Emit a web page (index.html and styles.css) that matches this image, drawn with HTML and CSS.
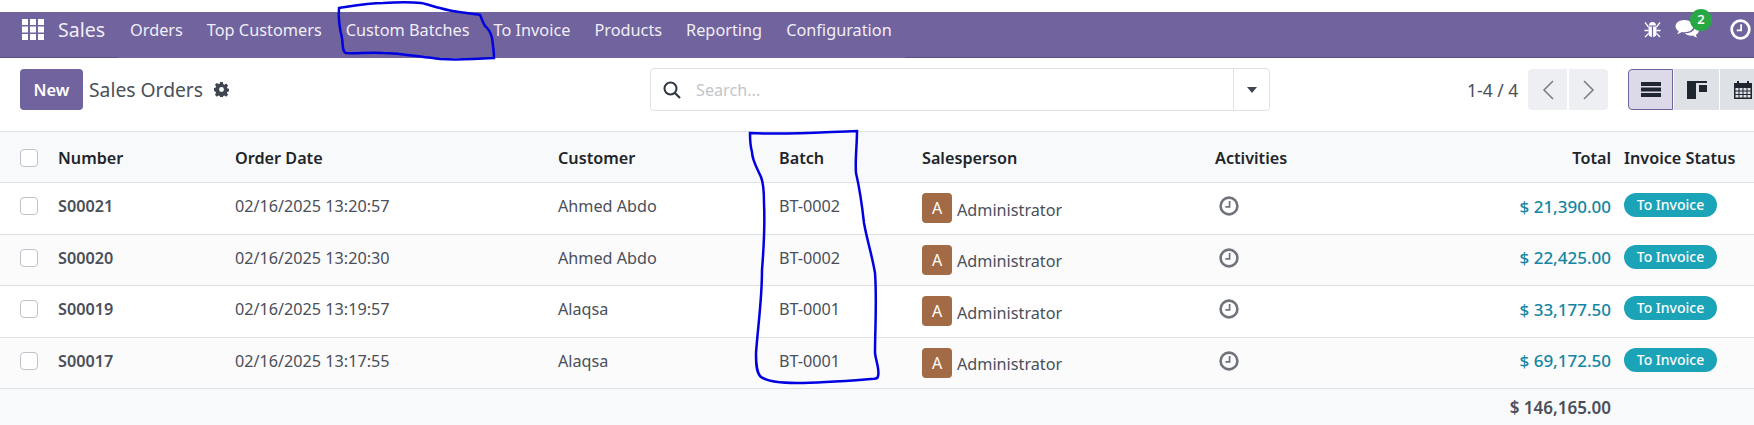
FILE: index.html
```html
<!DOCTYPE html>
<html>

<head>
  <meta charset="UTF-8">
  <title>Sales Orders</title>
  <link rel="stylesheet" href="styles.css">
</head>

<body>
  <svg class="defs" width="0" height="0">
    <symbol id="clock" viewBox="0 0 20 20">
      <circle cx="10" cy="10" r="8.4" fill="none" stroke="currentColor" stroke-width="2.6" />
      <path d="M10.6 5v5.8H6.4" fill="none" stroke="currentColor" stroke-width="1.7" />
    </symbol>
  </svg>

  <nav class="topbar">
    <svg class="apps" width="22" height="21" viewBox="0 0 22 21">
      <path fill="#fff" d="M0 0h6v6H0zM8 0h6v6H8zM16 0h6v6h-6zM0 7.500h6v6H0zM8 7.500h6v6H8zM16 7.500h6v6h-6zM0 15h6v6H0zM8 15h6v6H8zM16 15h6v6h-6z" />
    </svg>
    <span class="brand">Sales</span>
    <a>Orders</a>
    <a>Top Customers</a>
    <a>Custom Batches</a>
    <a>To Invoice</a>
    <a>Products</a>
    <a>Reporting</a>
    <a>Configuration</a>
    <div class="systray">
      <svg width="17" height="17" viewBox="0 0 17 17">
        <path fill="#fff" d="M5 4.500a3.500 3.500 0 0 1 7 0zM4.500 5.500h3.400V16c-2 0-3.400-1.500-3.400-3.500zM9.100 5.500h3.400v7c0 2-1.400 3.500-3.400 3.500z" />
        <path fill="none" stroke="#fff" stroke-width="1.300" d="M1 1.500l3.500 4.500M16 1.500L12.500 6M.5 9.500h4M16.500 9.500h-4M1 16l3.500-3.500M16 16l-3.500-3.500" />
      </svg>
      <span class="chat">
        <svg width="25" height="21" viewBox="0 0 25 21">
          <path fill="#fff" d="M9.500 1C4.500 1 .5 3.800.5 7.300c0 2 1.300 3.700 3.200 4.900-.3 1.100-.9 2-1.700 2.800 1.800-.2 3.400-1 4.600-2 .9.200 1.900.300 2.900.300 5 0 9-2.800 9-6S14.500 1 9.500 1z" />
          <path fill="#fff" d="M20 7.500c0 4-4.300 6.800-9.500 6.800h-.8c1.500 1.500 3.800 2.400 6.300 2.400.8 0 1.500-.1 2.200-.2.900.9 2.300 1.800 4 2.100-.7-.7-1.200-1.700-1.400-2.600 1.900-1.100 3-2.700 3-4.500 0-1.500-1.300-3-3.800-4z" />
        </svg>
        <span class="badge">2</span>
      </span>
      <svg class="tray-clock" width="21" height="21"><use href="#clock" /></svg>
    </div>
  </nav>

  <div class="control-panel">
    <div class="cp-left">
      <button class="btn-new">New</button>
      <span class="cp-title">Sales Orders</span>
      <svg width="15" height="15" viewBox="0 0 16 16">
        <path fill="#3f4650" fill-rule="evenodd" d="M6.600 0h2.800l.4 2.200 1.300.6 1.900-1.200 2 2-1.200 1.900.6 1.300 2.100.4v2.800l-2.100.4-.6 1.300 1.200 1.900-2 2-1.900-1.200-1.300.6-.4 2.200H6.600l-.4-2.200-1.300-.6-1.900 1.200-2-2 1.200-1.900-.6-1.300L-.5 9.400V6.600l2.100-.4.6-1.300L1 3l2-2 1.900 1.200 1.300-.6zM8 5.400a2.600 2.600 0 1 0 0 5.200 2.600 2.600 0 0 0 0-5.200z" />
      </svg>
    </div>
    <div class="search">
      <svg class="search-icon" width="18" height="18" viewBox="0 0 18 18">
        <circle cx="7.500" cy="7.500" r="6" fill="none" stroke="#2f3640" stroke-width="2" />
        <path d="M12 12l5 5" stroke="#2f3640" stroke-width="2.200" />
      </svg>
      <span class="search-text">Search...</span>
      <span class="search-toggle"><i class="caret"></i></span>
    </div>
    <div class="pager">
      <span class="pager-text">1-4 / 4</span>
      <span class="pager-btn">
        <svg width="12" height="20" viewBox="0 0 12 20"><path d="M11 1L2 10l9 9" fill="none" stroke="#777c84" stroke-width="1.500" /></svg>
      </span>
      <span class="pager-btn pager-next">
        <svg width="12" height="20" viewBox="0 0 12 20"><path d="M1 1l9 9-9 9" fill="none" stroke="#777c84" stroke-width="1.500" /></svg>
      </span>
    </div>
    <div class="views">
      <span class="view active">
        <svg width="20" height="16" viewBox="0 0 20 16"><path fill="#1f2630" d="M0 0h20v4H0zM0 5.500h20v4H0zM0 11h20v4H0z" /></svg>
      </span>
      <span class="view">
        <svg width="20" height="18" viewBox="0 0 20 18"><path fill="#1f2630" d="M0 0h20v2H0zM0 2h9v16H0zM12 4h8v7h-8z" /></svg>
      </span>
      <span class="view">
        <svg width="18" height="18" viewBox="0 0 18 18">
          <path fill="#1f2630" d="M3 0h2v3H3zM13 0h2v3h-2zM0 2h18v16H0z" />
          <path fill="#dee2e6" d="M1.500 7h3v2.500h-3zM5.500 7h3v2.500h-3zM9.500 7h3v2.500h-3zM13.500 7h3v2.500h-3zM1.500 10.500h3V13h-3zM5.500 10.500h3V13h-3zM9.500 10.500h3V13h-3zM13.500 10.500h3V13h-3zM1.500 14h3v2.500h-3zM5.500 14h3v2.500h-3zM9.500 14h3v2.500h-3zM13.500 14h3v2.500h-3z" />
        </svg>
      </span>
    </div>
  </div>

  <table class="orders">
    <colgroup>
      <col class="c-check">
      <col class="c-number">
      <col class="c-date">
      <col class="c-customer">
      <col class="c-batch">
      <col class="c-sales">
      <col class="c-activity">
      <col class="c-total">
      <col class="c-status">
    </colgroup>
    <thead>
      <tr>
        <th class="check"><span class="box"></span></th>
        <th>Number</th>
        <th>Order Date</th>
        <th>Customer</th>
        <th>Batch</th>
        <th>Salesperson</th>
        <th>Activities</th>
        <th class="num">Total</th>
        <th>Invoice Status</th>
      </tr>
    </thead>
    <tbody>
      <tr>
        <td class="check"><span class="box"></span></td>
        <td class="order">S00021</td>
        <td>02/16/2025 13:20:57</td>
        <td>Ahmed Abdo</td>
        <td>BT-0002</td>
        <td class="sales"><div class="person"><span class="avatar">A</span><span class="person-name">Administrator</span></div></td>
        <td class="activity"><svg width="20" height="20"><use href="#clock" /></svg></td>
        <td class="num amount">$ 21,390.00</td>
        <td><span class="status">To Invoice</span></td>
      </tr>
      <tr>
        <td class="check"><span class="box"></span></td>
        <td class="order">S00020</td>
        <td>02/16/2025 13:20:30</td>
        <td>Ahmed Abdo</td>
        <td>BT-0002</td>
        <td class="sales"><div class="person"><span class="avatar">A</span><span class="person-name">Administrator</span></div></td>
        <td class="activity"><svg width="20" height="20"><use href="#clock" /></svg></td>
        <td class="num amount">$ 22,425.00</td>
        <td><span class="status">To Invoice</span></td>
      </tr>
      <tr>
        <td class="check"><span class="box"></span></td>
        <td class="order">S00019</td>
        <td>02/16/2025 13:19:57</td>
        <td>Alaqsa</td>
        <td>BT-0001</td>
        <td class="sales"><div class="person"><span class="avatar">A</span><span class="person-name">Administrator</span></div></td>
        <td class="activity"><svg width="20" height="20"><use href="#clock" /></svg></td>
        <td class="num amount">$ 33,177.50</td>
        <td><span class="status">To Invoice</span></td>
      </tr>
      <tr>
        <td class="check"><span class="box"></span></td>
        <td class="order">S00017</td>
        <td>02/16/2025 13:17:55</td>
        <td>Alaqsa</td>
        <td>BT-0001</td>
        <td class="sales"><div class="person"><span class="avatar">A</span><span class="person-name">Administrator</span></div></td>
        <td class="activity"><svg width="20" height="20"><use href="#clock" /></svg></td>
        <td class="num amount">$ 69,172.50</td>
        <td><span class="status">To Invoice</span></td>
      </tr>
    </tbody>
    <tfoot>
      <tr>
        <td colspan="7"></td>
        <td class="num grand">$ 146,165.00</td>
        <td></td>
      </tr>
    </tfoot>
  </table>

  <!-- hand drawn marks on top of the screenshot -->
  <svg class="scribble" width="1754" height="425" viewBox="0 0 1754 425">
    <path d="M339 8C352 6 368 3 383 3 398 2 412 2 421 3 428 4 434 7 440 8 452 12 468 13 480 15 482 19 483 23 485 26 489 29 491 34 492 38 493 45 494 52 494 58 478 59 458 60 440 59 420 57 400 53 383 53 368 52 356 54 346 53 342 52 343 44 342 38 340 30 338 20 339 8Z" />
    <path d="M750 133C785 135 825 132 857 131 857 145 855 160 856 173 860 190 862 205 864 223 867 240 872 255 875 273 877 300 875 330 875 353 876 362 880 370 878 376 878 379 875 379 871 379 845 381 820 383 797 383 780 383 765 381 760 376 756 371 756 362 756 353 758 325 762 300 762 270 764 245 765 225 764 203 764 190 763 182 761 177 757 168 752 160 752 152 750 145 750 140 750 133Z" />
  </svg>
</body>

</html>
```

FILE: styles.css
```css
* {
  box-sizing: border-box;
}

html,
body {
  margin: 0;
  height: 425px;
  overflow: hidden;
}

body {
  width: 1754px;
  position: relative;
  padding-top: 12px;
  font-family: "Noto Sans", sans-serif;
  font-size: 16.2px;
  color: #4a4f59;
  background-color: #fff;
}

.defs {
  position: absolute;
}

/* navbar */
.topbar {
  display: flex;
  align-items: center;
  height: 46px;
  padding: 0 0 11px 22px;
  color: #f0eef6;
  background-color: #71639e;
  background-image: linear-gradient(#5b4f80, #5b4f80), linear-gradient(#5b4f80, #5b4f80);
  background-size: 118px 1px, 849px 1px;
  background-position: left bottom, right bottom;
  background-repeat: no-repeat;
}

.apps {
  margin-right: 14px;
}

.brand {
  font-size: 19.500px;
  margin-right: 25px;
}

.topbar a {
  margin-right: 24px;
  font-size: 16.3px;
}

.systray {
  display: flex;
  align-items: center;
  margin-left: auto;
  padding-right: 3px;
}

.chat {
  position: relative;
  display: flex;
  margin-left: 14px;
}

.badge {
  position: absolute;
  top: -10px;
  left: 15px;
  width: 22px;
  height: 22px;
  border-radius: 50%;
  font-size: 13px;
  font-weight: 600;
  line-height: 21px;
  text-align: center;
  color: #fff;
  background-color: #28a745;
}

.tray-clock {
  margin-left: 30px;
  color: #fff;
}

/* control panel */
.control-panel {
  display: flex;
  align-items: center;
  height: 73px;
  padding: 0 0 10px 20px;
}

.cp-left {
  display: flex;
  flex: none;
  align-items: center;
  width: 630px;
}

.btn-new {
  width: 63px;
  height: 41px;
  border: none;
  border-radius: 4px;
  font-family: inherit;
  font-size: 16.4px;
  font-weight: 600;
  color: #fff;
  background-color: #71639e;
}

.cp-title {
  margin: 0 11px 0 6px;
  font-size: 19.300px;
}

.search {
  display: flex;
  flex: none;
  align-items: center;
  width: 620px;
  height: 43px;
  border: 1px solid #dee2e6;
  border-radius: 4px;
}

.search-icon {
  margin: 0 15px 0 12px;
}

.search-text {
  flex: 1;
  color: #c2c6cc;
}

.search-toggle {
  display: flex;
  align-items: center;
  justify-content: center;
  width: 36px;
  height: 100%;
  border-left: 1px solid #dee2e6;
}

.caret {
  border-top: 6px solid #3f4650;
  border-left: 5.500px solid transparent;
  border-right: 5.500px solid transparent;
}

.pager {
  display: flex;
  flex: none;
  align-items: center;
  margin-left: 197px;
}

.pager-text {
  width: 61px;
  font-size: 17.500px;
}

.pager-btn {
  display: flex;
  align-items: center;
  justify-content: center;
  width: 39px;
  height: 41px;
  border-radius: 4px 0 0 4px;
  background-color: #eeeff2;
}

.pager-next {
  margin-left: 2px;
  border-radius: 0 4px 4px 0;
}

.views {
  display: flex;
  flex: none;
  gap: 1px;
  margin-left: 20px;
}

.view {
  display: flex;
  flex: none;
  align-items: center;
  justify-content: center;
  width: 45px;
  height: 41px;
  background-color: #dee2e6;
}

.view.active {
  border: 1px solid #71639e;
  border-radius: 4px 0 0 4px;
  background-color: #dcd9e8;
}

/* table */
.orders {
  width: 1754px;
  table-layout: fixed;
  border-collapse: collapse;
}

.c-check { width: 50px; }
.c-number { width: 177px; }
.c-date { width: 323px; }
.c-customer { width: 221px; }
.c-batch { width: 143px; }
.c-sales { width: 293px; }
.c-activity { width: 293px; }
.c-total { width: 116px; }
.c-status { width: 138px; }

th,
td {
  padding: 0 8px;
  border-bottom: 1px solid #dee2e6;
  text-align: left;
  white-space: nowrap;
}

thead tr {
  height: 51px;
  border-top: 1px solid #dee2e6;
  background-color: #f8f9fb;
}

th {
  padding-top: 1px;
  font-weight: 600;
  color: #212529;
}

tbody tr {
  height: 51.500px;
}

tbody td {
  padding-bottom: 4px;
}

tbody tr:nth-child(even) {
  background-color: #fbfbfc;
}

tbody td.sales {
  padding-bottom: 0;
}

tfoot tr {
  height: 37px;
  background-color: #f8f9fb;
}

tfoot td {
  border-bottom: none;
}

.check {
  padding-left: 20px;
}

.box {
  display: block;
  width: 18px;
  height: 18px;
  border: 1px solid #bfc3c9;
  border-radius: 4px;
  background-color: #fff;
}

.order,
.grand {
  font-weight: 600;
}

.num {
  padding-right: 5px;
  text-align: right;
}

.amount {
  font-size: 17px;
  font-weight: 500;
  color: #1286a3;
}

.grand {
  font-size: 17px;
}

.person {
  display: flex;
  align-items: center;
  gap: 5px;
}

.avatar {
  width: 30px;
  height: 30px;
  border-radius: 4px;
  font-size: 16px;
  line-height: 30px;
  text-align: center;
  color: #fff;
  background-color: #a26b45;
}

.person-name {
  padding-top: 3px;
}

.activity {
  padding-left: 12px;
  color: #6f747b;
}

.activity svg {
  display: block;
}

.status {
  display: inline-block;
  width: 93px;
  height: 24px;
  margin-bottom: 2px;
  border-radius: 12px;
  font-size: 14px;
  font-weight: 500;
  line-height: 23px;
  text-align: center;
  vertical-align: middle;
  color: #fff;
  background-color: #1ba3b8;
}

/* pen marks */
.scribble {
  position: absolute;
  top: 0;
  left: 0;
  pointer-events: none;
}

.scribble path {
  fill: none;
  stroke: #0000e0;
  stroke-width: 2.5;
}
```
